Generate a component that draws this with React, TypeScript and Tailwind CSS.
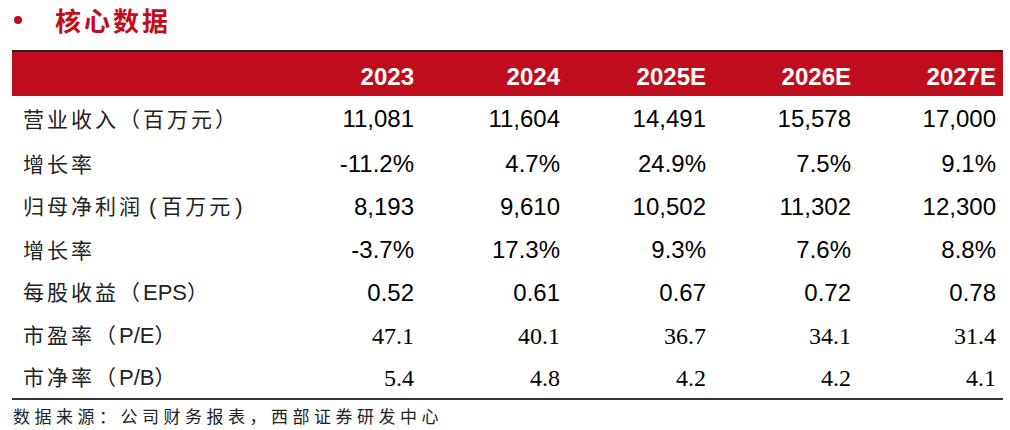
import React from "react";

type Row = { label: React.ReactNode; values: string[]; serif?: boolean; h: string };

const Lat = ({ children, className = "" }: { children: React.ReactNode; className?: string }) => (
  <span
    className={`tracking-normal text-[22px] ${className}`}
    style={{ fontFamily: '"Liberation Sans", Arial, sans-serif' }}
  >
    {children}
  </span>
);

const rows: Row[] = [
  { label: "营业收入（百万元）", values: ["11,081", "11,604", "14,491", "15,578", "17,000"], h: "h-[46px]" },
  { label: "增长率", values: ["-11.2%", "4.7%", "24.9%", "7.5%", "9.1%"], h: "h-[43px]" },
  {
    label: (
      <>
        归母净利润<Lat className="ml-[6px] mr-[5px]">(</Lat>百万元<Lat className="ml-[2px]">)</Lat>
      </>
    ),
    values: ["8,193", "9,610", "10,502", "11,302", "12,300"],
    h: "h-[43px]",
  },
  { label: "增长率", values: ["-3.7%", "17.3%", "9.3%", "7.6%", "8.8%"], h: "h-[43px]" },
  {
    label: (
      <>
        每股收益（<Lat>EPS</Lat>）
      </>
    ),
    values: ["0.52", "0.61", "0.67", "0.72", "0.78"],
    h: "h-[43px]",
  },
  {
    label: (
      <>
        市盈率（<Lat>P/E</Lat>）
      </>
    ),
    values: ["47.1", "40.1", "36.7", "34.1", "31.4"],
    serif: true,
    h: "h-[43px]",
  },
  {
    label: (
      <>
        市净率（<Lat>P/B</Lat>）
      </>
    ),
    values: ["5.4", "4.8", "4.2", "4.2", "4.1"],
    serif: true,
    h: "h-[41px]",
  },
];

const years = ["2023", "2024", "2025E", "2026E", "2027E"];

export default function App() {
  return (
    <div className="w-[1010px] h-[430px] bg-white overflow-hidden relative">
      <div className="flex items-center h-[40px] pl-[14px]">
        <div className="w-[8px] h-[8px] rounded-full bg-[#c00d1d]" />
        <div
          className="ml-[33px] text-[26px] font-bold tracking-[3px] text-[#c00d1d] leading-none"
          style={{ fontFamily: '"Noto Sans CJK SC", sans-serif' }}
        >
          核心数据
        </div>
      </div>
      <div className="ml-[12px] w-[991px] mt-[10px] border-t-2 border-[#222]">
        <div
          className="grid grid-cols-[256px_146px_146px_146px_145px_145px] h-[44px] bg-[#c00d1d] text-white font-bold text-[24px] items-center"
          style={{ fontFamily: '"Liberation Sans", Arial, sans-serif' }}
        >
          <div />
          {years.map((y) => (
            <div key={y} className="text-right pt-[6px] leading-none">
              {y}
            </div>
          ))}
        </div>
        <div className="border-b-2 border-[#333]">
          {rows.map((r, i) => (
            <div
              key={i}
              className={`grid grid-cols-[256px_146px_146px_146px_145px_145px] items-center ${r.h} text-black`}
            >
              <div
                className="pl-[11px] text-[21px] tracking-[3px] text-[#222] whitespace-nowrap"
                style={{ fontFamily: '"Noto Sans CJK SC", sans-serif' }}
              >
                {r.label}
              </div>
              {r.values.map((v, j) => (
                <div
                  key={j}
                  className="text-right text-[24px] leading-none"
                  style={{
                    fontFamily: r.serif
                      ? '"Liberation Serif", "Times New Roman", serif'
                      : '"Liberation Sans", Arial, sans-serif',
                  }}
                >
                  {v}
                </div>
              ))}
            </div>
          ))}
        </div>
      </div>
      <div
        className="pl-[13px] mt-[7px] text-[17px] tracking-[4.5px] text-[#222] leading-none"
        style={{ fontFamily: '"Noto Sans CJK SC", sans-serif' }}
      >
        数据来源：公司财务报表，西部证券研发中心
      </div>
    </div>
  );
}
